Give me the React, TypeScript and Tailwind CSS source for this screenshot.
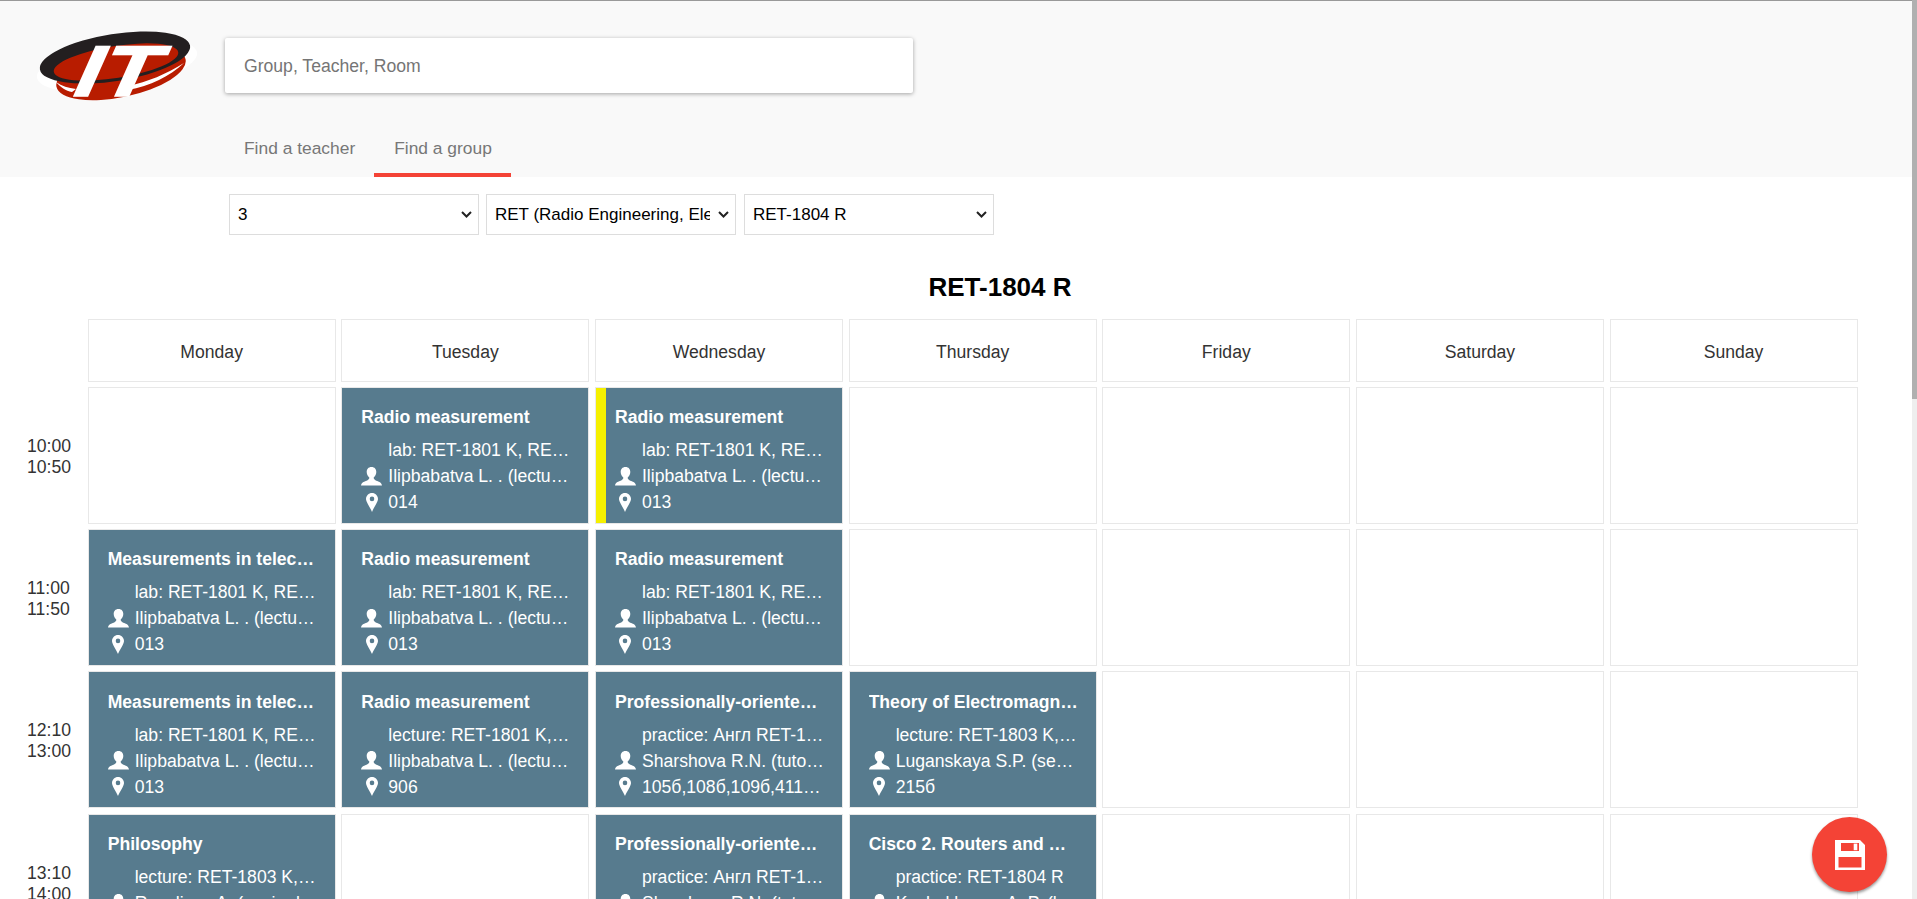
import React from "react";

type Lesson = { title: string; kind: string; teacher: string; room: string; mark?: boolean };

const radioLab = "lab: RET-1801 K, RET-1802 K, RET-1803 K";
const ilip = "Ilipbabatva L. . (lecturer)";
const prof = "Professionally-oriented foreign language";
const practice = "practice: Англ RET-1801 K, RET-1802 K";
const shar = "Sharshova R.N. (tutor-lecturer)";

const rows: { start: string; end: string; cells: (Lesson | null)[] }[] = [
  {
    start: "10:00",
    end: "10:50",
    cells: [
      null,
      { title: "Radio measurement", kind: radioLab, teacher: ilip, room: "014" },
      { title: "Radio measurement", kind: radioLab, teacher: ilip, room: "013", mark: true },
      null,
      null,
      null,
      null,
    ],
  },
  {
    start: "11:00",
    end: "11:50",
    cells: [
      { title: "Measurements in telecommunications", kind: radioLab, teacher: ilip, room: "013" },
      { title: "Radio measurement", kind: radioLab, teacher: ilip, room: "013" },
      { title: "Radio measurement", kind: radioLab, teacher: ilip, room: "013" },
      null,
      null,
      null,
      null,
    ],
  },
  {
    start: "12:10",
    end: "13:00",
    cells: [
      { title: "Measurements in telecommunications", kind: radioLab, teacher: ilip, room: "013" },
      { title: "Radio measurement", kind: "lecture: RET-1801 K, RET-1802 K", teacher: ilip, room: "906" },
      { title: prof, kind: practice, teacher: shar, room: "105б,108б,109б,411б,412б" },
      { title: "Theory of Electromagnetic Fields", kind: "lecture: RET-1803 K, RET-1804 R", teacher: "Luganskaya S.P. (senior lecturer)", room: "215б" },
      null,
      null,
      null,
    ],
  },
  {
    start: "13:10",
    end: "14:00",
    cells: [
      { title: "Philosophy", kind: "lecture: RET-1803 K, RET-1804 R", teacher: "Rusalinov A. (senior lecturer)", room: "215б" },
      null,
      { title: prof, kind: practice, teacher: shar, room: "105б,108б,109б,411б,412б" },
      { title: "Cisco 2. Routers and Routing Basics", kind: "practice: RET-1804 R", teacher: "Kuchukbaeva A. P. (lecturer)", room: "215б" },
      null,
      null,
      null,
    ],
  },
];

const days = ["Monday", "Tuesday", "Wednesday", "Thursday", "Friday", "Saturday", "Sunday"];

function PersonIcon() {
  return (
    <svg width="21" height="19" viewBox="0 0 21 19" fill="white">
      <path d="M10.5 0C7.3 0 5.7 2.2 5.7 5C5.7 7.5 7 9.5 8.3 10.5C8.5 12 7.5 12.8 5 14C2.5 15 .5 15.5 0 18.5H21C20.5 15.5 18.5 15 16 14C13.5 12.8 12.5 12 12.7 10.5C14 9.5 15.3 7.5 15.3 5C15.3 2.2 13.7 0 10.5 0Z" />
    </svg>
  );
}

function PinIcon() {
  return (
    <svg width="12" height="19" viewBox="0 0 12 19" fill="white">
      <path
        fillRule="evenodd"
        d="M6 0C2.7 0 0 2.7 0 6C0 9 4.5 15 6 19C7.5 15 12 9 12 6C12 2.7 9.3 0 6 0ZM6 3.6a2.3 2.3 0 1 0 0 4.6a2.3 2.3 0 1 0 0-4.6Z"
      />
    </svg>
  );
}

function Logo() {
  return (
    <svg width="190" height="90" viewBox="0 0 190 90">
      <ellipse cx="97" cy="45" rx="81" ry="24" transform="rotate(-9 97 45)" fill="white" />
      <ellipse cx="101" cy="53" rx="66" ry="24" transform="rotate(-12 101 53)" fill="#b81c00" />
      <path d="M108 70C130 66 150 56 164 43C146 54 128 62 108 66Z" fill="white" />
      <path d="M36 62C42 66 48 68 56 69L52 72C46 71 40 67 36 62Z" fill="white" />
      <ellipse cx="95" cy="37.5" rx="76" ry="23.5" transform="rotate(-9 95 37.5)" fill="#231f20" />
      <ellipse cx="96" cy="42" rx="63" ry="16" transform="rotate(-9 96 42)" fill="#b81c00" />
      <text
        transform="translate(48 76) skewX(-24)"
        fontFamily="'Liberation Sans', sans-serif"
        fontWeight="700"
        fontSize="72"
        fill="white"
        stroke="white"
        strokeWidth="1.5"
        textLength="82"
        lengthAdjust="spacingAndGlyphs"
      >
        IT
      </text>
    </svg>
  );
}

function SaveIcon() {
  return (
    <svg width="30" height="30" viewBox="0 0 30 30">
      <path fill="white" fillRule="evenodd" d="M0 0H25L30 5V30H0ZM6 3V11H24V3ZM3.5 17V27.5H26.5V17Z" />
      <rect x="18.7" y="3.6" width="3.6" height="6.6" fill="white" />
    </svg>
  );
}

function Line({ icon, text, narrow }: { icon?: React.ReactNode; text: string; narrow?: boolean }) {
  return (
    <div
      className={
        narrow
          ? "grid grid-cols-[21px_minmax(0,1fr)] gap-x-[6px] pr-[2px] items-center h-[26px]"
          : "grid grid-cols-[21px_minmax(0,1fr)] gap-x-[6px] items-center h-[26px]"
      }
    >
      <div className="flex justify-center">{icon}</div>
      <div className="truncate">{text}</div>
    </div>
  );
}

function Card({ lesson }: { lesson: Lesson }) {
  return (
    <div
      className={
        lesson.mark
          ? "h-full bg-[#577b8e] border-l-[10px] border-[#f5f000] pl-[9px] pr-[17px] pt-[16.2px] text-white"
          : "h-full bg-[#577b8e] pl-[19px] pr-[17px] pt-[16.2px] text-white"
      }
    >
      <div className="font-bold truncate leading-[26px] mb-[7.3px]">{lesson.title}</div>
      <Line text={lesson.kind} />
      <Line icon={<PersonIcon />} text={lesson.teacher} narrow={lesson.teacher === ilip} />
      <Line icon={<PinIcon />} text={lesson.room} />
    </div>
  );
}

function Select({ value }: { value: string }) {
  return (
    <div className="relative w-[250px] h-[41px]">
      <select
        className="appearance-none w-full h-full border border-[#ddd] pl-[8px] pr-[25px] text-[17px] text-black"
        defaultValue={value}
      >
        <option value={value}>{value}</option>
      </select>
      <svg
        className="absolute right-[7px] top-[17px] pointer-events-none"
        width="11"
        height="7"
        viewBox="0 0 11 7"
        fill="none"
        stroke="#222"
        strokeWidth="2"
      >
        <path d="M1 1L5.5 5.5L10 1" />
      </svg>
    </div>
  );
}

export default function App() {
  return (
    <div className="relative h-screen overflow-hidden bg-white font-['Liberation_Sans',Arial,sans-serif] text-[17.6px] text-[#333]">
      <div className="pr-[5px]">
        <header className="h-[177px] bg-[#f9f9f9] border-t border-[#999] flex">
          <div className="w-[224px] pl-[20px] pt-[19px] shrink-0">
            <Logo />
          </div>
          <div className="flex flex-col">
            <div className="w-[688px] h-[56px] ml-px mt-[37px] bg-white rounded-[2px] shadow-[0_1px_4px_rgba(0,0,0,0.35)] flex items-center pl-[19px] pt-[2px] text-[#757575]">
              Group, Teacher, Room
            </div>
            <nav className="flex mt-[19px] text-[#777] text-[17.4px]">
              <div className="h-[65px] pl-[20px] pr-[19px] pt-[26px] leading-[21px]">Find a teacher</div>
              <div className="h-[65px] pl-[20px] pr-[19px] pt-[26px] leading-[21px] border-b-4 border-[#f44336]">Find a group</div>
            </nav>
          </div>
        </header>

        <div className="flex pl-[229px] pt-[17px] gap-[7px]">
          <Select value="3" />
          <Select value="RET (Radio Engineering, Electronics and Telecommunications)" />
          <div className="ml-px">
            <Select value="RET-1804 R" />
          </div>
        </div>

        <h1 className="pl-[88px] mt-[37px] text-center font-bold text-[26px] leading-[30px] text-black">RET-1804 R</h1>

        <div className="grid grid-cols-[82px_repeat(7,248px)] grid-rows-[62.5px_repeat(4,137px)] gap-x-[5.67px] gap-y-[5.33px] mt-[17px]">
          <div />
          {days.map((d) => (
            <div key={d} className="border border-[#e8e8e8] flex items-center justify-center pt-[3px]">
              {d}
            </div>
          ))}
          {rows.map((r, ri) => (
            <React.Fragment key={ri}>
              <div className="flex flex-col justify-center pl-[27px] pt-[2.5px] leading-[21px]">
                <div>{r.start}</div>
                <div>{r.end}</div>
              </div>
              {r.cells.map((c, ci) => (
                <div key={ci} className="border border-[#e8e8e8]">
                  {c && <Card lesson={c} />}
                </div>
              ))}
            </React.Fragment>
          ))}
        </div>
      </div>

      <div className="absolute right-0 top-0 bottom-0 w-[5px] bg-[#eeeeee]">
        <div className="h-[399px] bg-[#b0b0b0]" />
      </div>

      <button className="fixed left-[1812px] top-[817px] w-[75px] h-[75px] rounded-full bg-[#f44336] shadow-[0_2px_3px_rgba(0,0,0,0.4)] flex items-center justify-center">
        <SaveIcon />
      </button>
    </div>
  );
}
